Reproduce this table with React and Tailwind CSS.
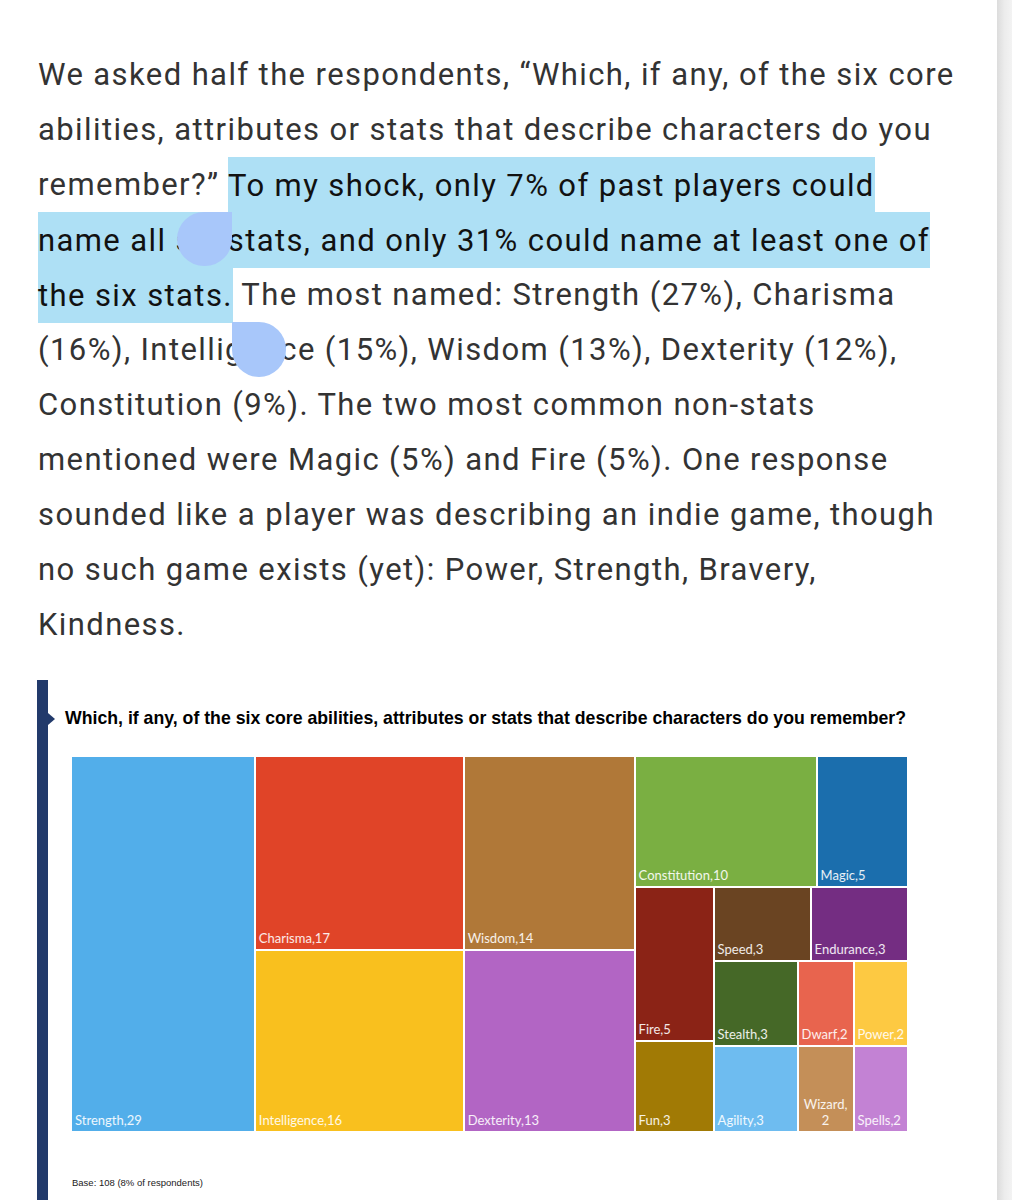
import React from 'react';

const Cell = ({ label, color, className = '', center = false }) => (
    <div className={`flex items-end ${color} ${className}`}>
        <span
            className={`px-[3px] pb-[3px] text-[13px] leading-[16px] text-white/90 font-['Lato',sans-serif] ${center ? 'w-full text-center' : ''}`}
        >
            {label}
        </span>
    </div>
);

const Treemap = () => {
    return (
        <div className="flex w-[835px] h-[374px] gap-[2px]">
            <Cell label="Strength,29" color="bg-[#52aeea]" className="w-[182px]" />

            <div className="flex flex-col w-[207px] gap-[2px]">
                <Cell label="Charisma,17" color="bg-[#e04428]" className="h-[192px]" />
                <Cell label="Intelligence,16" color="bg-[#f9c01e]" className="flex-1" />
            </div>

            <div className="flex flex-col w-[169px] gap-[2px]">
                <Cell label="Wisdom,14" color="bg-[#b07838]" className="h-[192px]" />
                <Cell label="Dexterity,13" color="bg-[#b265c4]" className="flex-1" />
            </div>

            <div className="flex flex-col flex-1 gap-[2px]">
                <div className="flex h-[129px] gap-[2px]">
                    <Cell label="Constitution,10" color="bg-[#7aaf42]" className="w-[180px]" />
                    <Cell label="Magic,5" color="bg-[#1b6ead]" className="flex-1" />
                </div>
                <div className="flex flex-1 gap-[2px]">
                    <div className="flex flex-col w-[77px] gap-[2px]">
                        <Cell label="Fire,5" color="bg-[#8b2316]" className="h-[152px]" />
                        <Cell label="Fun,3" color="bg-[#a17a05]" className="flex-1" />
                    </div>
                    <div className="flex flex-col flex-1 gap-[2px]">
                        <div className="flex h-[72px] gap-[2px]">
                            <Cell label="Speed,3" color="bg-[#6a4422]" className="w-[95px]" />
                            <Cell label="Endurance,3" color="bg-[#742d82]" className="flex-1" />
                        </div>
                        <div className="flex flex-1 gap-[2px]">
                            <div className="flex flex-col w-[82px] gap-[2px]">
                                <Cell label="Stealth,3" color="bg-[#456827]" className="h-[83px]" />
                                <Cell label="Agility,3" color="bg-[#6ebcf0]" className="flex-1" />
                            </div>
                            <div className="flex flex-col w-[54px] gap-[2px]">
                                <Cell label="Dwarf,2" color="bg-[#e8644e]" className="h-[83px]" />
                                <Cell label={<>Wizard,<br />2</>} color="bg-[#c48f58]" className="flex-1" center />
                            </div>
                            <div className="flex flex-col flex-1 gap-[2px]">
                                <Cell label="Power,2" color="bg-[#fdc942]" className="h-[83px]" />
                                <Cell label="Spells,2" color="bg-[#c382d4]" className="flex-1" />
                            </div>
                        </div>
                    </div>
                </div>
            </div>
        </div>
    );
};

export default function App() {
    return (
        <div className="flex w-[1012px] h-[1200px] overflow-hidden bg-white">
            <div className="relative flex-1">
                <p className="w-[962px] pl-[38px] pt-[47px] text-[31px] leading-[55px] tracking-[1.4px] text-[#333] font-['Roboto',sans-serif]">
                    We asked half the respondents, “Which, if any, of the six core abilities, attributes or stats
                    that describe characters do you remember?”{' '}
                    <span className="bg-[#aee0f5] text-[#111] py-[9.5px] box-decoration-clone">
                        To my shock, only 7% of past players could name all six stats, and only 31% could name at
                        least one of the six stats.
                    </span>{' '}
                    The most named: Strength (27%), Charisma (16%), Intelligence (15%), Wisdom (13%), Dexterity
                    (12%), Constitution (9%). The two most common non-stats mentioned were Magic (5%) and Fire (5%).
                    One response sounded like a player was describing an indie game, though no such game exists
                    (yet): Power, Strength, Bravery, Kindness.
                </p>

                {/* selection handles */}
                <div className="absolute left-[177px] top-[212px] w-[55px] h-[54px] rounded-full rounded-tr-none bg-[#a8c7fa]" />
                <div className="absolute left-[232px] top-[322px] w-[54px] h-[55px] rounded-full rounded-tl-none bg-[#a8c7fa]" />

                <div className="relative mt-[28px] ml-[37px] border-l-[11px] border-[#223a6b] pl-[24px] pt-[28px] pb-[20px]">
                    <div className="absolute left-0 top-[33px] w-0 h-0 border-y-[6px] border-y-transparent border-l-[7px] border-l-[#223a6b]" />
                    <h2 className="-ml-[7px] whitespace-nowrap text-[17.7px] leading-[20px] font-bold text-black font-['Liberation_Sans',sans-serif]">
                        Which, if any, of the six core abilities, attributes or stats that describe characters do you remember?
                    </h2>
                    <div className="mt-[29px]">
                        <Treemap />
                    </div>
                    <p className="mt-[46px] text-[9.5px] leading-[11px] text-[#222] font-['Liberation_Sans',sans-serif]">
                        Base: 108 (8% of respondents)
                    </p>
                </div>
            </div>
            <div className="w-[15px] bg-linear-to-r from-[#dcdcdc] via-[#ececec] to-[#f3f3f3]" />
        </div>
    );
}
